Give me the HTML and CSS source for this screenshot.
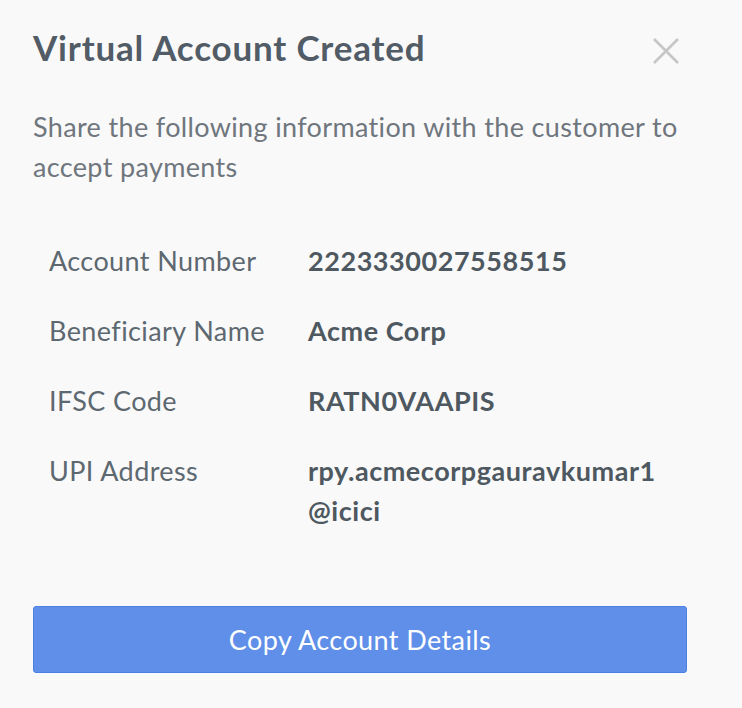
FILE: index.html
```html
<!DOCTYPE html>
<html lang="en">
<head>
    <meta charset="UTF-8">
    <meta name="viewport" content="width=device-width, initial-scale=1.0">
    <title>Virtual Account Created</title>
    <link rel="stylesheet" href="styles.css">
</head>
<body>

<!-- modal -->
<div class="modal">
    <div class="modal-header">
        <h1 class="modal-title">Virtual Account Created</h1>
        <button class="close-btn" type="button" aria-label="Close">
            <svg width="28" height="28" viewBox="0 0 28 28">
                <path d="M2 2 L26 26 M26 2 L2 26" stroke="#c6c6c6" stroke-width="2.6" fill="none"/>
            </svg>
        </button>
    </div>

    <p class="modal-text">Share the following information with the customer to accept payments</p>

    <!-- account details -->
    <div class="details">
        <div class="row">
            <div class="label">Account Number</div>
            <div class="value">2223330027558515</div>
        </div>
        <div class="row">
            <div class="label">Beneficiary Name</div>
            <div class="value">Acme Corp</div>
        </div>
        <div class="row">
            <div class="label">IFSC Code</div>
            <div class="value">RATN0VAAPIS</div>
        </div>
        <div class="row">
            <div class="label">UPI Address</div>
            <div class="value">rpy.acmecorpgauravkumar1<br>@icici</div>
        </div>
    </div>

    <button class="copy-btn" type="button">Copy Account Details</button>
</div>

</body>
</html>
```

FILE: styles.css
```css
/* page */
body {
    margin: 0;
    background-color: #f9f9f9;
    font-family: 'Lato', 'Liberation Sans', sans-serif;
}

.modal {
    padding: 26px 55px 0 33px;
}

/* header with title and close icon */
.modal-header {
    display: flex;
    justify-content: space-between;
    align-items: flex-start;
}

.modal-title {
    margin: 0;
    font-size: 35px;
    font-weight: 700;
    line-height: 42px;
    letter-spacing: 0.8px;
    color: #515c66;
}

.close-btn {
    margin-top: 11px;
    margin-right: 7px;
    padding: 0;
    border: none;
    background: none;
    cursor: pointer;
}

.modal-text {
    margin: 39px 0 0 0;
    font-size: 27px;
    line-height: 40px;
    letter-spacing: 0.35px;
    color: #6f767d;
}

/* details table */
.details {
    margin-top: 54px;
    padding-left: 16px;
}

.row {
    display: flex;
    font-size: 27px;
    line-height: 40px;
    letter-spacing: 0.4px;
    margin-bottom: 30px;
}

.label {
    width: 259px;
    flex-shrink: 0;
    color: #5d6870;
}

.value {
    font-weight: 700;
    letter-spacing: 0.55px;
    color: #4e5860;
}

/* main button */
.copy-btn {
    display: block;
    width: 100%;
    height: 67px;
    margin-top: 75px;
    background-color: #5f8fe8;
    border: 1px solid #4d80e4;
    border-radius: 3px;
    color: #ffffff;
    font-family: 'Lato', 'Liberation Sans', sans-serif;
    font-size: 27px;
    letter-spacing: 0.4px;
    cursor: pointer;
}
```
